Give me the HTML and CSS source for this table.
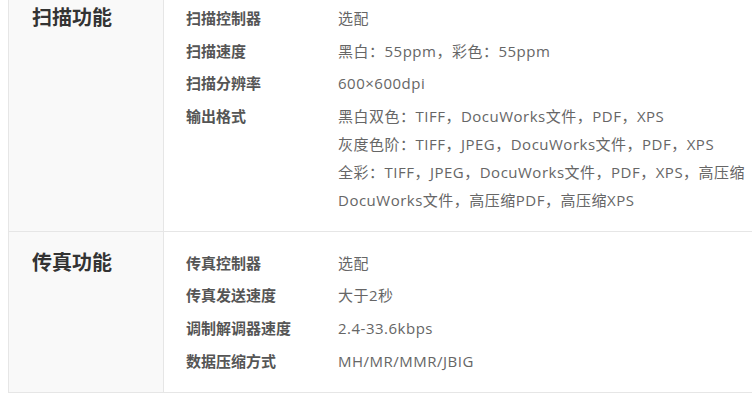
FILE: index.html
```html
<!DOCTYPE html>
<html lang="zh-CN">
<head>
<meta charset="utf-8">
<link rel="stylesheet" href="styles.css">
</head>
<body>
<div class="spec">
  <section class="group first">
    <div class="title">扫描功能</div>
    <div class="items">
      <div class="row"><div class="label">扫描控制器</div><div class="value">选配</div></div>
      <div class="row"><div class="label">扫描速度</div><div class="value">黑白：55ppm，彩色：55ppm</div></div>
      <div class="row"><div class="label">扫描分辨率</div><div class="value">600×600dpi</div></div>
      <div class="row"><div class="label">输出格式</div><div class="value">黑白双色：TIFF，DocuWorks文件，PDF，XPS<br>灰度色阶：TIFF，JPEG，DocuWorks文件，PDF，XPS<br>全彩：TIFF，JPEG，DocuWorks文件，PDF，XPS，高压缩<br>DocuWorks文件，高压缩PDF，高压缩XPS</div></div>
    </div>
  </section>
  <section class="group">
    <div class="title">传真功能</div>
    <div class="items">
      <div class="row"><div class="label">传真控制器</div><div class="value">选配</div></div>
      <div class="row"><div class="label">传真发送速度</div><div class="value">大于2秒</div></div>
      <div class="row"><div class="label">调制解调器速度</div><div class="value">2.4-33.6kbps</div></div>
      <div class="row"><div class="label">数据压缩方式</div><div class="value">MH/MR/MMR/JBIG</div></div>
    </div>
  </section>
</div>
</body>
</html>
```
FILE: styles.css
```css
html, body {
  margin: 0;
  padding: 0;
  background: #fff;
}
body {
  font-family: "Open Sans", "Noto Sans CJK SC", sans-serif;
  color: #666;
}
.spec {
  margin-left: 8px;
  border-left: 1px solid #e6e6e6;
}
.group {
  display: grid;
  grid-template-columns: 155px 1fr;
  border-bottom: 1px solid #e6e6e6;
}
.title {
  background: #f9f9f9;
  border-right: 1px solid #e6e6e6;
  padding: 17px 0 0 23px;
  font-size: 20px;
  font-weight: bold;
  color: #333;
  line-height: 28px;
}
.group.first .title {
  padding-top: 4px;
}
.items {
  display: flex;
  flex-direction: column;
  gap: 4.6px;
  padding: 17px 0 17px 22px;
}
.group.first .items {
  padding-top: 4px;
  padding-bottom: 17px;
}
.row {
  display: flex;
}
.label {
  width: 152px;
  flex: none;
  font-size: 15px;
  font-weight: bold;
  color: #555;
  line-height: 28px;
}
.value {
  font-size: 15px;
  letter-spacing: 0.5px;
  line-height: 28px;
  color: #666;
  white-space: nowrap;
}
```
